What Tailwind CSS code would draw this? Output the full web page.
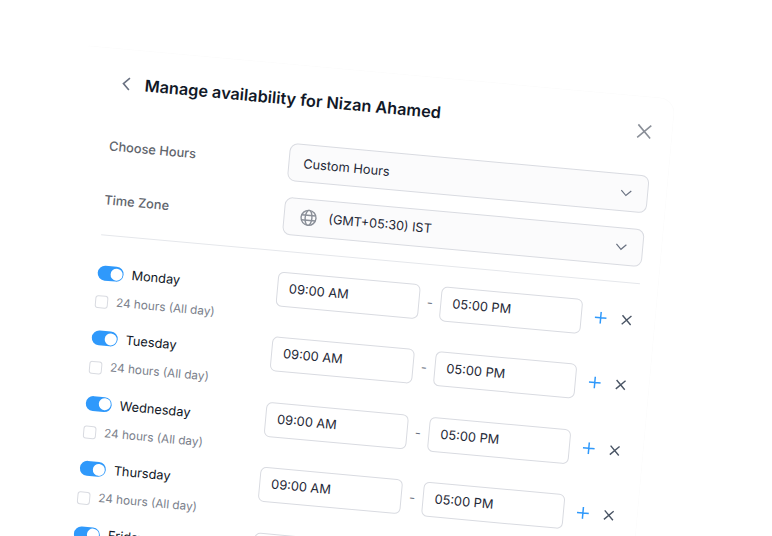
<!DOCTYPE html>
<html lang="en">
<head>
    <meta charset="UTF-8">
    <title>Manage availability</title>
    <script src="https://cdn.jsdelivr.net/npm/@tailwindcss/browser@4"></script>
</head>
<body class="bg-white h-[536px] w-[772px] overflow-hidden relative font-['Inter',sans-serif]">

    <!-- tilted dialog, rotated about the page corner -->
    <div class="absolute left-0 top-0 origin-top-left rotate-[5.2deg] w-[700px] pl-[92px] pt-[37px]">
    <div class="w-[590px] pl-[30px] pt-[20px] border-t border-r border-[#fcfcfc] rounded-tr-2xl">

        <div class="relative flex items-center h-7 mb-[30px] pl-[30px]">
            <svg class="absolute left-[4px] top-[6px] w-4 h-4 text-gray-500" viewBox="0 0 16 16" fill="none" stroke="currentColor" stroke-width="1.6"><path d="M10.5 2 L4.5 8 L10.5 14"/></svg>
            <h1 class="text-[16.3px] font-semibold text-[#111827] whitespace-nowrap">Manage availability for Nizan Ahamed</h1>
            <svg class="absolute left-[524px] top-[7px] w-[15px] h-[15px] text-[#8a8f98]" viewBox="0 0 15 15" fill="none" stroke="currentColor" stroke-width="1.6"><path d="M1 1 L14 14 M14 1 L1 14"/></svg>
        </div>

        <div class="flex items-center mb-4">
            <div class="w-[180px] pt-[2px] text-[12.8px] font-medium text-[#61656d]">Choose Hours</div>
            <div class="w-[361px] h-[38px] rounded-lg border border-[#d9dbe1] bg-[#fbfbfc] flex items-center pl-[14px] pr-[14px] text-[12.8px] text-[#1f2937]">
                <span class="flex-1 pt-px">Custom Hours</span>
                <svg class="w-3.5 h-3.5 text-gray-500" viewBox="0 0 14 14" fill="none" stroke="currentColor" stroke-width="1.2"><path d="M2 5 L7 10 L12 5"/></svg>
            </div>
        </div>

        <div class="flex items-center mb-4">
            <div class="w-[180px] pt-[2px] text-[12.8px] font-medium text-[#61656d]">Time Zone</div>
            <div class="w-[361px] h-[38px] rounded-lg border border-[#d9dbe1] bg-[#fbfbfc] flex items-center pl-[15px] pr-[14px] text-[12.6px] text-[#1f2937]">
                <svg class="w-[18px] h-[18px] text-[#8a8f98] mr-[11px]" viewBox="0 0 18 18" fill="none" stroke="currentColor" stroke-width="1.4"><circle cx="9" cy="9" r="7.5"/><ellipse cx="9" cy="9" rx="3.4" ry="7.5"/><path d="M2 6.5 H16 M2 11.5 H16"/></svg>
                <span class="flex-1 pt-px">(GMT+05:30) IST</span>
                <svg class="w-3.5 h-3.5 text-gray-500" viewBox="0 0 14 14" fill="none" stroke="currentColor" stroke-width="1.2"><path d="M2 5 L7 10 L12 5"/></svg>
            </div>
        </div>

        <div class="w-[541px] h-px bg-gray-200 mb-5"></div>

        <div class="flex flex-col gap-[30.4px]">
            <div class="flex items-start h-[35px]">
                <div class="w-[180px]">
                    <div class="flex items-center gap-2 h-[35px]">
                        <span class="relative block w-[26px] h-[15px] rounded-full bg-[#2f99fb]"><span class="absolute right-[1.5px] top-[1.5px] w-3 h-3 rounded-full bg-white"></span></span>
                        <span class="text-[12.8px] text-[#111827]">Monday</span>
                    </div>
                    <div class="flex items-center gap-2 text-[11.8px] text-[#7b818c] mt-[3px]">
                        <span class="w-[13px] h-[13px] rounded-[3px] border border-[#d9dbe1]"></span>24 hours (All day)
                    </div>
                </div>
                <div class="w-[143px] h-[35px] rounded-md border border-[#d9dbe1] flex items-center pl-[11px] pb-[2px] text-[12.8px] text-[#1f2937]">09:00 AM</div>
                <span class="self-center w-[21px] text-center text-gray-500 text-[13px]">-</span>
                <div class="w-[142px] h-[35px] rounded-md border border-[#d9dbe1] flex items-center pl-[11px] pb-[2px] text-[12.8px] text-[#1f2937]">05:00 PM</div>
                <div class="flex items-center h-[35px] pl-[13px] pb-px gap-[14px]">
                    <svg class="w-3 h-3 text-[#2f99fb]" viewBox="0 0 12 12" fill="none" stroke="currentColor" stroke-width="1.5"><path d="M6 0 V12 M0 6 H12"/></svg>
                    <svg class="w-3 h-3 text-gray-600" viewBox="0 0 12 12" fill="none" stroke="currentColor" stroke-width="1.4"><path d="M1.5 1.5 L10.5 10.5 M10.5 1.5 L1.5 10.5"/></svg>
                </div>
            </div>
            <div class="flex items-start h-[35px]">
                <div class="w-[180px]">
                    <div class="flex items-center gap-2 h-[35px]">
                        <span class="relative block w-[26px] h-[15px] rounded-full bg-[#2f99fb]"><span class="absolute right-[1.5px] top-[1.5px] w-3 h-3 rounded-full bg-white"></span></span>
                        <span class="text-[12.8px] text-[#111827]">Tuesday</span>
                    </div>
                    <div class="flex items-center gap-2 text-[11.8px] text-[#7b818c] mt-[3px]">
                        <span class="w-[13px] h-[13px] rounded-[3px] border border-[#d9dbe1]"></span>24 hours (All day)
                    </div>
                </div>
                <div class="w-[143px] h-[35px] rounded-md border border-[#d9dbe1] flex items-center pl-[11px] pb-[2px] text-[12.8px] text-[#1f2937]">09:00 AM</div>
                <span class="self-center w-[21px] text-center text-gray-500 text-[13px]">-</span>
                <div class="w-[142px] h-[35px] rounded-md border border-[#d9dbe1] flex items-center pl-[11px] pb-[2px] text-[12.8px] text-[#1f2937]">05:00 PM</div>
                <div class="flex items-center h-[35px] pl-[13px] pb-px gap-[14px]">
                    <svg class="w-3 h-3 text-[#2f99fb]" viewBox="0 0 12 12" fill="none" stroke="currentColor" stroke-width="1.5"><path d="M6 0 V12 M0 6 H12"/></svg>
                    <svg class="w-3 h-3 text-gray-600" viewBox="0 0 12 12" fill="none" stroke="currentColor" stroke-width="1.4"><path d="M1.5 1.5 L10.5 10.5 M10.5 1.5 L1.5 10.5"/></svg>
                </div>
            </div>
            <div class="flex items-start h-[35px]">
                <div class="w-[180px]">
                    <div class="flex items-center gap-2 h-[35px]">
                        <span class="relative block w-[26px] h-[15px] rounded-full bg-[#2f99fb]"><span class="absolute right-[1.5px] top-[1.5px] w-3 h-3 rounded-full bg-white"></span></span>
                        <span class="text-[12.8px] text-[#111827]">Wednesday</span>
                    </div>
                    <div class="flex items-center gap-2 text-[11.8px] text-[#7b818c] mt-[3px]">
                        <span class="w-[13px] h-[13px] rounded-[3px] border border-[#d9dbe1]"></span>24 hours (All day)
                    </div>
                </div>
                <div class="w-[143px] h-[35px] rounded-md border border-[#d9dbe1] flex items-center pl-[11px] pb-[2px] text-[12.8px] text-[#1f2937]">09:00 AM</div>
                <span class="self-center w-[21px] text-center text-gray-500 text-[13px]">-</span>
                <div class="w-[142px] h-[35px] rounded-md border border-[#d9dbe1] flex items-center pl-[11px] pb-[2px] text-[12.8px] text-[#1f2937]">05:00 PM</div>
                <div class="flex items-center h-[35px] pl-[13px] pb-px gap-[14px]">
                    <svg class="w-3 h-3 text-[#2f99fb]" viewBox="0 0 12 12" fill="none" stroke="currentColor" stroke-width="1.5"><path d="M6 0 V12 M0 6 H12"/></svg>
                    <svg class="w-3 h-3 text-gray-600" viewBox="0 0 12 12" fill="none" stroke="currentColor" stroke-width="1.4"><path d="M1.5 1.5 L10.5 10.5 M10.5 1.5 L1.5 10.5"/></svg>
                </div>
            </div>
            <div class="flex items-start h-[35px]">
                <div class="w-[180px]">
                    <div class="flex items-center gap-2 h-[35px]">
                        <span class="relative block w-[26px] h-[15px] rounded-full bg-[#2f99fb]"><span class="absolute right-[1.5px] top-[1.5px] w-3 h-3 rounded-full bg-white"></span></span>
                        <span class="text-[12.8px] text-[#111827]">Thursday</span>
                    </div>
                    <div class="flex items-center gap-2 text-[11.8px] text-[#7b818c] mt-[3px]">
                        <span class="w-[13px] h-[13px] rounded-[3px] border border-[#d9dbe1]"></span>24 hours (All day)
                    </div>
                </div>
                <div class="w-[143px] h-[35px] rounded-md border border-[#d9dbe1] flex items-center pl-[11px] pb-[2px] text-[12.8px] text-[#1f2937]">09:00 AM</div>
                <span class="self-center w-[21px] text-center text-gray-500 text-[13px]">-</span>
                <div class="w-[142px] h-[35px] rounded-md border border-[#d9dbe1] flex items-center pl-[11px] pb-[2px] text-[12.8px] text-[#1f2937]">05:00 PM</div>
                <div class="flex items-center h-[35px] pl-[13px] pb-px gap-[14px]">
                    <svg class="w-3 h-3 text-[#2f99fb]" viewBox="0 0 12 12" fill="none" stroke="currentColor" stroke-width="1.5"><path d="M6 0 V12 M0 6 H12"/></svg>
                    <svg class="w-3 h-3 text-gray-600" viewBox="0 0 12 12" fill="none" stroke="currentColor" stroke-width="1.4"><path d="M1.5 1.5 L10.5 10.5 M10.5 1.5 L1.5 10.5"/></svg>
                </div>
            </div>
            <div class="flex items-start h-[35px]">
                <div class="w-[180px]">
                    <div class="flex items-center gap-2 h-[35px]">
                        <span class="relative block w-[26px] h-[15px] rounded-full bg-[#2f99fb]"><span class="absolute right-[1.5px] top-[1.5px] w-3 h-3 rounded-full bg-white"></span></span>
                        <span class="text-[12.8px] text-[#111827]">Friday</span>
                    </div>
                </div>
                <div class="w-[143px] h-[35px] rounded-md border border-[#d9dbe1]"></div>
            </div>
        </div>
    </div>
    </div>
</body>
</html>
